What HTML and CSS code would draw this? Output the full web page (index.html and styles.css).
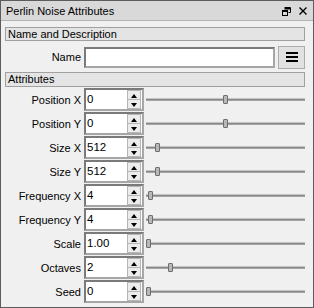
FILE: index.html
```html
<!DOCTYPE html>
<html lang="en">
    <head>
        <meta charset="UTF-8">
        <title>Perlin Noise Attributes</title>
        <link rel="stylesheet" href="styles.css">
    </head>
    <body>
        <div class="window">
            <div class="titlebar">
                <span class="title">Perlin Noise Attributes</span>
                <span class="title-icons">
                    <svg width="9" height="9" viewBox="0 0 9 9">
                        <path d="M2.5 0.5h6v5h-2" fill="none" stroke="#000" stroke-width="1"/>
                        <rect x="2.5" y="1" width="6" height="1.5" fill="#000"/>
                        <rect x="0.5" y="3.5" width="5" height="5" fill="none" stroke="#000"/>
                        <rect x="0.5" y="3.5" width="5" height="1.5" fill="#000"/>
                    </svg>
                    <svg width="8" height="8" viewBox="0 0 8 8">
                        <path d="M0.5 0.5L7.5 7.5M7.5 0.5L0.5 7.5" stroke="#000" stroke-width="1.4"/>
                    </svg>
                </span>
            </div>
            <div class="content">
                <div class="group-header">Name and Description</div>
                <div class="name-row">
                    <label class="label">Name</label>
                    <div class="name-input"></div>
                    <button class="menu-btn"><span></span><span></span><span></span></button>
                </div>
                <div class="group-header attr">Attributes</div>

                <div class="row">
                    <label class="label">Position X</label>
                    <div class="spinbox"><span class="value">0</span><div class="spin"><i class="up"></i><i class="down"></i></div></div>
                    <div class="slider"><div class="groove"></div><div class="handle" style="left: 77px"></div></div>
                </div>
                <div class="row">
                    <label class="label">Position Y</label>
                    <div class="spinbox"><span class="value">0</span><div class="spin"><i class="up"></i><i class="down"></i></div></div>
                    <div class="slider"><div class="groove"></div><div class="handle" style="left: 77px"></div></div>
                </div>
                <div class="row">
                    <label class="label">Size X</label>
                    <div class="spinbox"><span class="value">512</span><div class="spin"><i class="up"></i><i class="down"></i></div></div>
                    <div class="slider"><div class="groove"></div><div class="handle" style="left: 9px"></div></div>
                </div>
                <div class="row">
                    <label class="label">Size Y</label>
                    <div class="spinbox"><span class="value">512</span><div class="spin"><i class="up"></i><i class="down"></i></div></div>
                    <div class="slider"><div class="groove"></div><div class="handle" style="left: 9px"></div></div>
                </div>
                <div class="row">
                    <label class="label">Frequency X</label>
                    <div class="spinbox"><span class="value">4</span><div class="spin"><i class="up"></i><i class="down"></i></div></div>
                    <div class="slider"><div class="groove"></div><div class="handle" style="left: 2px"></div></div>
                </div>
                <div class="row">
                    <label class="label">Frequency Y</label>
                    <div class="spinbox"><span class="value">4</span><div class="spin"><i class="up"></i><i class="down"></i></div></div>
                    <div class="slider"><div class="groove"></div><div class="handle" style="left: 2px"></div></div>
                </div>
                <div class="row">
                    <label class="label">Scale</label>
                    <div class="spinbox"><span class="value">1.00</span><div class="spin"><i class="up"></i><i class="down"></i></div></div>
                    <div class="slider"><div class="groove"></div><div class="handle" style="left: 0px"></div></div>
                </div>
                <div class="row">
                    <label class="label">Octaves</label>
                    <div class="spinbox"><span class="value">2</span><div class="spin"><i class="up"></i><i class="down"></i></div></div>
                    <div class="slider"><div class="groove"></div><div class="handle" style="left: 22px"></div></div>
                </div>
                <div class="row">
                    <label class="label">Seed</label>
                    <div class="spinbox"><span class="value">0</span><div class="spin"><i class="up"></i><i class="down"></i></div></div>
                    <div class="slider"><div class="groove"></div><div class="handle" style="left: 0px"></div></div>
                </div>
            </div>
        </div>
    </body>
</html>
```

FILE: styles.css
```css
html, body{
    margin: 0;
    padding: 0;
}

body{
    font-family: "Liberation Sans", Arial, sans-serif;
    font-size: 11px;
    color: #000;
}

.window{
    width: 314px;
    height: 308px;
    box-sizing: border-box;
    border: 1px solid #5c5c5c;
    background-color: #f0f0f0;
}

.titlebar{
    display: flex;
    align-items: center;
    height: 19px;
    padding: 0 6px 0 5px;
    background-color: #d9d9d9;
    border-bottom: 1px solid #b4b4b4;
}

.titlebar .title{
    flex: 1;
    font-size: 11px;
}

.title-icons{
    display: flex;
    align-items: center;
    gap: 8px;
    padding-top: 1px;
}

.title-icons svg{
    display: block;
}

.content{
    padding: 6px 8px 0 4px;
}

.group-header{
    height: 12px;
    line-height: 12px;
    padding-left: 2px;
    border: 1px solid #a0a0a0;
    background-color: #e4e4e4;
}

.group-header.attr{
    height: 13px;
    line-height: 13px;
    margin-top: 4px;
}

.label{
    width: 76px;
    flex: none;
    text-align: right;
    padding-right: 3px;
}

.name-row{
    display: flex;
    align-items: center;
    margin-top: 5px;
    height: 22px;
}

.name-input{
    width: 188px;
    height: 17px;
    border: 2px solid #8c8c8c;
    border-color: #7a7a7a #a6a6a6 #a6a6a6 #7a7a7a;
    background-color: #fff;
}

.menu-btn{
    display: flex;
    flex-direction: column;
    justify-content: center;
    align-items: center;
    gap: 2px;
    width: 27px;
    height: 23px;
    margin-left: 3px;
    padding: 0;
    border: 1px solid #adadad;
    background-color: #e1e1e1;
}

.menu-btn span{
    display: block;
    width: 12px;
    height: 2px;
    background-color: #000;
}

.row{
    display: flex;
    align-items: center;
    height: 23px;
    margin-top: 1px;
}

.row:first-of-type{
    margin-top: 5px;
}

.spinbox{
    display: flex;
    width: 60px;
    height: 23px;
    box-sizing: border-box;
    border: 2px solid #8c8c8c;
    border-color: #7a7a7a #a6a6a6 #a6a6a6 #7a7a7a;
    background-color: #fff;
}

.spinbox .value{
    flex: 1;
    line-height: 19px;
    padding-left: 1px;
    font-size: 11.5px;
}

.spin{
    display: flex;
    flex-direction: column;
    width: 14px;
    margin: 0 1px 0 0;
}

.spin i{
    flex: 1;
    position: relative;
    border: 1px solid #b6b6b6;
    background-color: #ececec;
}

.spin i.down{
    border-top: none;
}

.spin i::after{
    content: '';
    position: absolute;
    left: 3px;
    width: 0;
    height: 0;
    border-left: 3.5px solid transparent;
    border-right: 3.5px solid transparent;
}

.spin i.up::after{
    top: 3px;
    border-bottom: 4px solid #000;
}

.spin i.down::after{
    top: 3px;
    border-top: 4px solid #000;
}

.slider{
    position: relative;
    flex: 1;
    height: 23px;
    margin-left: 2px;
}

.slider .groove{
    margin-top: 10px;
    height: 3px;
    background-color: #a3a3a3;
    border-top: 1px solid #c4c4c4;
    box-sizing: border-box;
}

.slider .groove::after{
    content: '';
    display: block;
    height: 1px;
    background-color: #8a8a8a;
}

.slider .handle{
    position: absolute;
    top: 7px;
    width: 3px;
    height: 7px;
    border: 1px solid #6e6e6e;
    border-radius: 1px;
    background-color: #b8b8b8;
}
```
